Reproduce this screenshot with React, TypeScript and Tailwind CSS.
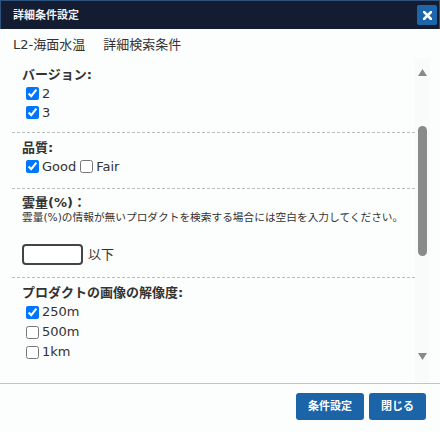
import React from 'react';

const font = "font-['DejaVu_Sans','Noto_Sans_CJK_JP',sans-serif]";

function Check({ label, checked }: { label: string; checked?: boolean }) {
  return (
    <label className="flex items-center">
      <input type="checkbox" defaultChecked={checked} className="m-0 ml-[4px] mr-[3px] h-[13px] w-[13px] accent-[#0075ff]" />
      <span>{label}</span>
    </label>
  );
}

function Scrollbar() {
  return (
    <div className="w-[15px] flex flex-col items-center bg-[#f9fafa]">
      {/* up arrow */}
      <svg width="9" height="7" viewBox="0 0 9 7" className="mt-[11px]">
        <polygon points="4.5,0 9,7 0,7" fill="#888" />
      </svg>
      {/* thumb */}
      <div className="mt-[50px] h-[130px] w-[9px] rounded-full bg-[#8a8a8a]" />
      {/* down arrow */}
      <svg width="9" height="7" viewBox="0 0 9 7" className="mt-[97px]">
        <polygon points="0,0 9,0 4.5,7" fill="#888" />
      </svg>
    </div>
  );
}

export default function App() {
  return (
    <div className={`w-[440px] h-[432px] bg-[#fcfdfd] flex flex-col text-[#333] ${font}`}>
      {/* title bar */}
      <div className="h-[29px] shrink-0 bg-[#131c30] border-t border-l border-r border-[#2c527f] flex items-center justify-between pl-[12px] pr-[2px]">
        <span className="text-[11px] font-bold text-[#eef0f3] leading-none">詳細条件設定</span>
        <button className="w-[20px] h-[20px] rounded-[2px] bg-[#1d66ab] flex items-center justify-center">
          <svg width="9" height="9" viewBox="0 0 9 9">
            <path d="M1 1 L8 8 M8 1 L1 8" stroke="#fff" strokeWidth="2.6" strokeLinecap="square" />
          </svg>
        </button>
      </div>

      {/* sub header */}
      <div className="h-[29px] shrink-0 pt-[7px] pl-[13px] text-[13px] leading-[18px]">
        <span>L2-海面水温</span>
        <span className="ml-[18px]">詳細検索条件</span>
      </div>

      {/* scroll area */}
      <div className="flex h-[325px] shrink-0 pr-[10px]">
        <div className="flex-1 text-[13px]">
          <div className="pt-[8px] pb-[10px] pl-[10px] ml-[12px] border-b border-dashed border-[#bbb]">
            <div className="font-bold leading-[18px]">バージョン:</div>
            <div className="h-[19px] flex items-center"><Check label="2" checked /></div>
            <div className="h-[19px] flex items-center"><Check label="3" checked /></div>
          </div>

          <div className="pt-[6px] pb-[12px] pl-[10px] ml-[12px] border-b border-dashed border-[#bbb]">
            <div className="font-bold leading-[18px]">品質:</div>
            <div className="h-[19px] flex items-center">
              <Check label="Good" checked />
              <Check label="Fair" />
            </div>
          </div>

          <div className="pt-[5px] pb-[12px] pl-[10px] ml-[12px] border-b border-dashed border-[#bbb]">
            <div className="font-bold leading-[18px]">雲量(%)：</div>
            <div className="text-[10.7px] leading-[12px] whitespace-nowrap">雲量(%)の情報が無いプロダクトを検索する場合には空白を入力してください。</div>
            <div className="mt-[20px] flex items-center">
              <input type="text" className="w-[61px] h-[21px] border-2 border-[#444] rounded-[4px] bg-white" />
              <span className="ml-[5px] leading-[21px]">以下</span>
            </div>
          </div>

          <div className="pt-[6px] pl-[10px] ml-[12px]">
            <div className="font-bold leading-[18px]">プロダクトの画像の解像度:</div>
            <div className="h-[20px] flex items-center"><Check label="250m" checked /></div>
            <div className="h-[20px] flex items-center"><Check label="500m" /></div>
            <div className="h-[20px] flex items-center"><Check label="1km" /></div>
          </div>
        </div>
        <Scrollbar />
      </div>

      {/* footer */}
      <div className="border-t border-[#a5cbe6] flex-1 flex justify-end gap-[5px] pt-[9px] pr-[14px]">
        <button className="h-[27px] px-[12px] rounded-[3px] bg-[#1b64a8] text-white text-[11px] font-bold leading-none">条件設定</button>
        <button className="h-[27px] px-[12px] rounded-[3px] bg-[#1b64a8] text-white text-[11px] font-bold leading-none">閉じる</button>
      </div>
    </div>
  );
}
